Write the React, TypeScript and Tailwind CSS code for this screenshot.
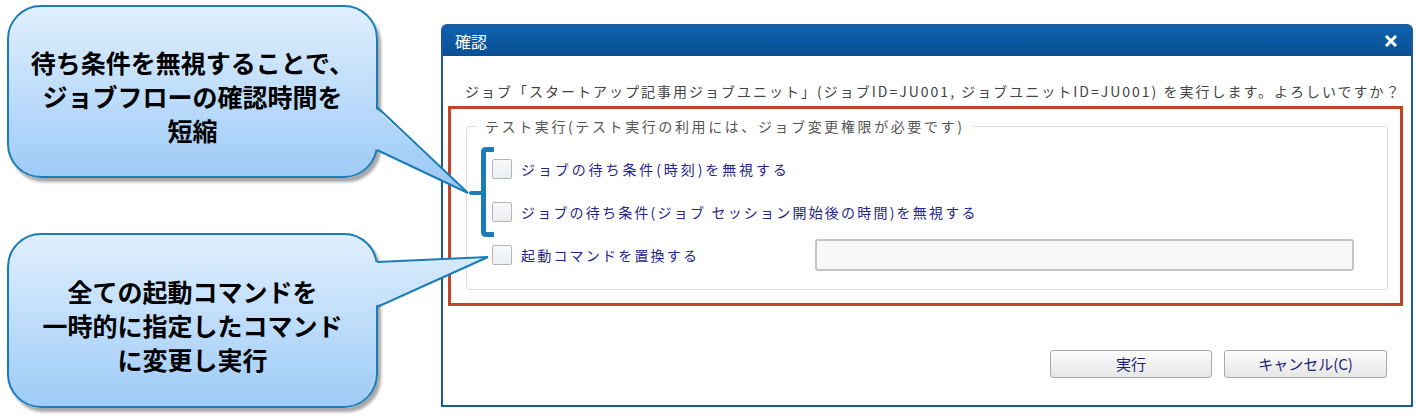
import React from 'react';

const jp = { fontFamily: '"Noto Sans CJK JP", "Noto Sans", sans-serif' };

function Callout({ lines, className }: { lines: string[]; className: string }) {
  return (
    <div
      className={`relative flex flex-col items-center justify-center rounded-[34px] border-2 border-[#1a7db5] bg-gradient-to-b from-[#e0effe] to-[#9ecbf6] shadow-[3px_4px_3px_rgba(0,0,0,0.35)] ${className}`}
    >
      {lines.map((l) => (
        <div key={l} className="text-[25px] font-bold leading-[34px] text-black">
          {l}
        </div>
      ))}
    </div>
  );
}

function Check({ label, wide, track = 'tracking-[2.2px]' }: { label: string; wide?: boolean; track?: string }) {
  return (
    <div className="flex h-[32px] items-center">
      <span className="h-[20px] w-[20px] shrink-0 rounded-[2px] border border-[#b5b5b5] bg-gradient-to-b from-[#f7f9fb] to-[#eceff2]" />
      <span
        className={`ml-[9px] shrink-0 text-[14px] text-[#25258d] ${track} ${wide ? 'w-[294px]' : ''}`}
      >
        {label}
      </span>
      {wide && (
        <div className="h-[32px] w-[539px] rounded-[3px] border-2 border-[#c4c4c4] bg-[#f8f8f8]" />
      )}
    </div>
  );
}

export default function App() {
  return (
    <div className="relative flex h-[419px] w-[1416px] overflow-hidden bg-white" style={jp}>
      {/* annotations */}
      <div className="flex w-[441px] shrink-0 flex-col pl-[7px] pt-[5px]">
        <Callout
          className="h-[173px] w-[371px] pt-[9px]"
          lines={['待ち条件を無視することで、', 'ジョブフローの確認時間を', '短縮']}
        />
        <Callout
          className="mt-[55px] h-[175px] w-[371px] pt-[9px]"
          lines={['全ての起動コマンドを', '一時的に指定したコマンド', 'に変更し実行']}
        />
      </div>

      {/* dialog */}
      <div className="mt-[24px] flex h-[383px] w-[972px] flex-col rounded-t-[6px] border-2 border-[#1a5a9c] bg-white">
        <div className="flex h-[30px] items-center justify-between bg-gradient-to-b from-[#0f62ad] to-[#0a4f93] pl-[12px] pr-[13px]">
          <span className="text-[16px] leading-none text-white">確認</span>
          <svg width="14" height="12" viewBox="0 0 14 12">
            <path d="M2 1 L12 11 M12 1 L2 11" stroke="#fff" strokeWidth="3" />
          </svg>
        </div>

        <div className="flex flex-1 flex-col px-[5px] pt-[25px]">
          <p className="h-[20px] whitespace-nowrap pl-[17px] text-[14px] leading-[20px] tracking-[2px] text-[#444]">
            ジョブ「スタートアップ記事用ジョブユニット」(ジョブID=JU001, ジョブユニットID=JU001) を実行します。よろしいですか？
          </p>

          <div className="mt-[5px] mr-[3px] border-[3px] border-[#c0462b] pb-[13px] pl-[15px] pr-[12px] pt-[7px]">
            <fieldset className="rounded-[3px] border border-[#dcdcdc] pb-[18px]">
              <legend className="ml-[9px] px-[9px] text-[14px] leading-[20px] tracking-[2.6px] text-[#555]">
                テスト実行(テスト実行の利用には、ジョブ変更権限が必要です)
              </legend>
              <div className="mt-[17px] flex flex-col gap-[11px] pl-[25px]">
                <Check label="ジョブの待ち条件(時刻)を無視する" track="tracking-[2.9px]" />
                <Check label="ジョブの待ち条件(ジョブ セッション開始後の時間)を無視する" />
                <Check label="起動コマンドを置換する" wide />
              </div>
            </fieldset>
          </div>

          <div className="mt-[44px] flex justify-end gap-[12px] pr-[19px]">
            <button className="h-[28px] w-[162px] rounded-[3px] border border-[#a9a9a9] bg-gradient-to-b from-[#fdfdfd] to-[#e6e6e6] text-[15px] text-[#1d1d7a]">
              実行
            </button>
            <button className="h-[28px] w-[163px] rounded-[3px] border border-[#a9a9a9] bg-gradient-to-b from-[#fdfdfd] to-[#e6e6e6] text-[15px] text-[#1d1d7a]">
              キャンセル(C)
            </button>
          </div>
        </div>
      </div>

      {/* callout tails and bracket */}
      <svg className="pointer-events-none absolute left-0 top-0" width="1416" height="419">
        <defs>
          <linearGradient id="g1" gradientUnits="userSpaceOnUse" x1="0" y1="5" x2="0" y2="178">
            <stop offset="0" stopColor="#e0effe" />
            <stop offset="1" stopColor="#9ecbf6" />
          </linearGradient>
          <linearGradient id="g2" gradientUnits="userSpaceOnUse" x1="0" y1="233" x2="0" y2="408">
            <stop offset="0" stopColor="#e0effe" />
            <stop offset="1" stopColor="#9ecbf6" />
          </linearGradient>
        </defs>
        <path d="M375 108 L468 193 L375 149 Z" fill="url(#g1)" />
        <path d="M377 107 L468 193 L377 150" fill="none" stroke="#1a7db5" strokeWidth="2" />
        <path d="M375 262 L488 257 L375 306 Z" fill="url(#g2)" />
        <path d="M377 262 L488 257 L377 307" fill="none" stroke="#1a7db5" strokeWidth="2" />
        <path d="M494 149.5 H486 Q483.5 149.5 483.5 152 V232 Q483.5 234.5 486 234.5 H494" fill="none" stroke="#1a7db5" strokeWidth="5" strokeLinejoin="round" />
        <path d="M471 193 H483" stroke="#1a7db5" strokeWidth="4" strokeLinecap="round" />
      </svg>
    </div>
  );
}
